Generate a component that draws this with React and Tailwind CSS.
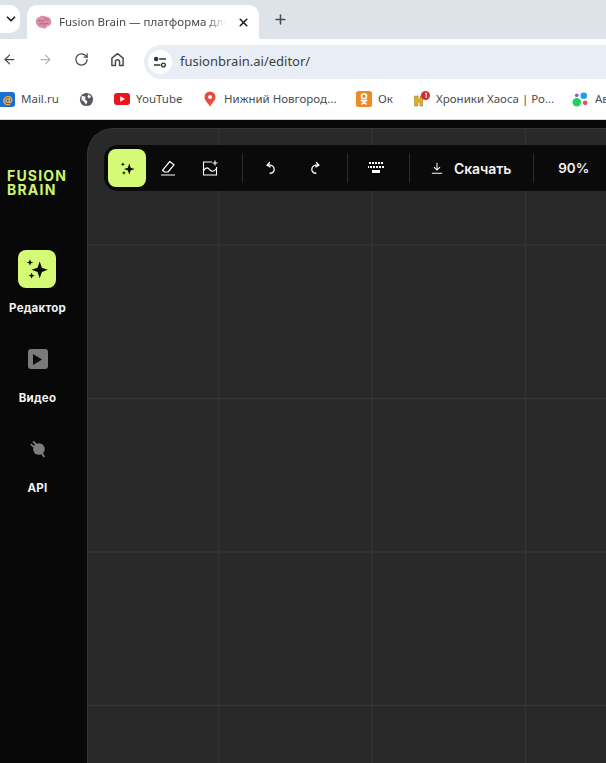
import React from "react";
import { ArrowLeft, ArrowRight, RotateCw, X, Plus, ChevronDown } from "lucide-react";

const Sparkles = ({ className }) => (
  <svg viewBox="0 0 24 24" className={className} fill="currentColor">
    <path d="M14.5 5 L16.5 10.800 L22 12.800 L16.5 14.800 L14.500 20.500 L12.500 14.800 L7 12.800 L12.500 10.800 Z" />
    <path d="M5.500 3 L6.400 5.200 L8.600 6 L6.400 6.800 L5.500 9 L4.600 6.800 L2.400 6 L4.600 5.200 Z" />
    <path d="M7 15.500 L7.800 17.400 L9.800 18.200 L7.800 19 L7 21 L6.200 19 L4.200 18.200 L6.200 17.400 Z" />
  </svg>
);

const UndoIcon = ({ className }) => (
  <svg viewBox="0 0 24 24" className={className} fill="none" stroke="currentColor" strokeWidth="2.200" strokeLinecap="round" strokeLinejoin="round">
    <path d="M9.500 2.500L5.500 7L10.500 10" />
    <path d="M5.500 7C12 6 17.500 9 17.500 14C17.500 18 14 20.500 10.500 21" />
  </svg>
);

const Bookmark = ({ icon, label, className }) => (
  <div className={`flex items-center gap-[6px] shrink-0 ${className}`}>
    {icon}
    {label && <span className="text-[11.500px] text-[#4a4d51] whitespace-nowrap">{label}</span>}
  </div>
);

const NavItem = ({ icon, label, className }) => (
  <div className={`flex flex-col items-center ${className}`}>
    <div className="w-[38px] h-[38px] flex items-center justify-center">{icon}</div>
    <span className="mt-[13px] text-[11.500px] leading-[14px] font-bold tracking-[0.2px] text-[#f2f2f2]">{label}</span>
  </div>
);

const Divider = ({ className }) => <div className={`w-px h-[30px] bg-[#2c2c2e] shrink-0 ${className}`}></div>;

const App = () => {
  return (
    <div className="w-[606px] h-[763px] overflow-hidden flex flex-col bg-[#080808] font-['Noto_Sans',sans-serif]">
      {/* tab strip */}
      <div className="h-[39px] bg-[#dee3ea] flex items-end shrink-0">
        <div className="w-[20px] h-[28px] mb-[6px] bg-white rounded-r-[10px] flex items-center justify-end pr-[2px]">
          <ChevronDown className="w-[14px] h-[14px] text-[#202124]" strokeWidth={3} />
        </div>
        <div className="ml-[7px] w-[232px] h-[34px] bg-white rounded-t-[10px] flex items-center pl-[8px] pr-[9px]">
          <svg viewBox="0 0 16 14" className="w-[17px] h-[15px] shrink-0">
            <path d="M1 7C0 4.500 2 2 4 2C5.500 0.300 9 0.300 10.500 1.500C13 1.200 15.500 3.500 15.300 6.500C15.500 9 13.500 10.500 11.500 10.500C10.500 13 8.500 13.500 7.500 12C5 12.500 1.500 10.500 1 7Z" fill="#db8fa9" />
            <path d="M3 5.500C5 4.500 7 6.500 9 5.500M4 8.500C6.500 7.500 9 9.500 12.500 7.500M9 2.500C9 4 11 5 13 4" stroke="#a65a78" strokeWidth="0.800" fill="none" />
          </svg>
          <span className="ml-[7px] text-[11.500px] text-[#45484c] whitespace-nowrap overflow-hidden w-[167px] [mask-image:linear-gradient(to_right,black_88%,transparent)]">
            Fusion Brain — платформа для генерации
          </span>
          <X className="ml-auto w-[13px] h-[13px] text-[#202124]" strokeWidth={3} />
        </div>
        <Plus className="ml-[14px] mb-[12px] w-[15px] h-[15px] text-[#4a4d51]" strokeWidth={2.500} />
      </div>

      {/* address bar */}
      <div className="h-[40px] bg-white flex items-center shrink-0">
        <ArrowLeft className="ml-[2px] w-[15px] h-[15px] text-[#474a4d]" strokeWidth={2} />
        <ArrowRight className="ml-[21px] w-[15px] h-[15px] text-[#b4b6b9]" strokeWidth={2} />
        <RotateCw className="ml-[21px] w-[15px] h-[15px] text-[#474a4d]" strokeWidth={2} />
        <svg viewBox="0 0 16 16" className="ml-[21px] w-[15px] h-[15px] text-[#474a4d]" fill="none" stroke="currentColor" strokeWidth="1.600" strokeLinejoin="round">
          <path d="M2 14.500V6.500L8 1.800L14 6.500V14.500H10.200V10.500A2.200 2.200 0 0 0 5.800 10.500V14.500Z" />
        </svg>
        <div className="ml-[19px] flex-1 h-[34px] mt-[6px] bg-[#e9eef6] rounded-l-[17px] flex items-center pl-[4px]">
          <div className="w-[24px] h-[24px] rounded-full bg-white flex items-center justify-center">
            <svg viewBox="0 0 16 14" className="w-[14px] h-[12px]" fill="none" stroke="#303235" strokeWidth="1.600">
              <circle cx="3.500" cy="3.500" r="1.800" fill="#303235" />
              <path d="M7 3.500H15M1 10.500H8.500" />
              <circle cx="12" cy="10.500" r="2.200" />
            </svg>
          </div>
          <span className="ml-[8px] text-[13px] text-[#3e4043]">fusionbrain.ai/editor/</span>
        </div>
      </div>

      {/* bookmarks */}
      <div className="h-[41px] bg-white flex items-center shrink-0 border-b border-[#d9d9d9] overflow-hidden">
        <Bookmark
          className="w-[79px]"
          label="Mail.ru"
          icon={
            <div className="w-[15px] h-[15px] bg-[#1a6fd0] rounded-r-[3px] flex items-center justify-center text-[11px] font-bold leading-none text-[#f4b63f]">
              @
            </div>
          }
        />
        <Bookmark
          className="w-[35px]"
          icon={
            <svg viewBox="0 0 16 16" className="w-[15px] h-[15px]">
              <circle cx="8" cy="8" r="7" fill="#55585c" />
              <path d="M3 4L7 5L6.500 8L9 10L7.500 13.500L5.500 10.500L2.500 8ZM10 2.500L13 5L10.500 7L9 5Z" fill="#fff" />
            </svg>
          }
        />
        <Bookmark
          className="w-[90px]"
          label="YouTube"
          icon={
            <svg viewBox="0 0 16 12" className="w-[16px] h-[12px]">
              <rect width="16" height="12" rx="3" fill="#e8141c" />
              <path d="M6.300 3.300L11 6L6.300 8.700Z" fill="#fff" />
            </svg>
          }
        />
        <Bookmark
          className="w-[152px] !gap-[8px]"
          label="Нижний Новгород..."
          icon={
            <svg viewBox="0 0 12 16" className="w-[12px] h-[16px]">
              <path d="M6 0.500A5.500 5.500 0 0 1 11.500 6C11.500 9.500 8 12 6 15.500C4 12 0.500 9.500 0.500 6A5.500 5.500 0 0 1 6 0.500Z" fill="#ea4b3c" />
              <circle cx="6" cy="6" r="2" fill="#fff" />
            </svg>
          }
        />
        <Bookmark
          className="w-[58px]"
          label="Ок"
          icon={
            <svg viewBox="0 0 16 16" className="w-[16px] h-[16px]">
              <rect width="16" height="16" rx="2.500" fill="#ee8a26" />
              <circle cx="8" cy="5.200" r="2.500" fill="none" stroke="#fff" strokeWidth="1.500" />
              <path d="M4.800 9C6.800 10.300 9.200 10.300 11.200 9M8 10V11M5.500 13.500L8 11L10.500 13.500" fill="none" stroke="#fff" strokeWidth="1.500" />
            </svg>
          }
        />
        <Bookmark
          className="w-[158px]"
          label="Хроники Хаоса | Ро..."
          icon={
            <svg viewBox="0 0 16 16" className="w-[16px] h-[16px]">
              <path d="M0.500 5H4V8H6V5H8.500V15H6V11H4V15H0.500Z" fill="#e4b024" stroke="#8a6a10" strokeWidth="0.500" />
              <circle cx="11.500" cy="4.500" r="4.500" fill="#d42f2a" />
              <path d="M11 2.500L12.200 2V7" stroke="#fff" strokeWidth="1" fill="none" />
            </svg>
          }
        />
        <Bookmark
          className="w-[40px]"
          label="Ав"
          icon={
            <svg viewBox="0 0 18 16" className="w-[17px] h-[15px]">
              <circle cx="5" cy="11" r="4.500" fill="#1fd15a" />
              <circle cx="12.500" cy="4" r="3.500" fill="#1f9df0" />
              <circle cx="14" cy="11.500" r="2.500" fill="#ef4a5c" />
              <circle cx="5" cy="3.500" r="2" fill="#8a5be0" />
            </svg>
          }
        />
      </div>

      {/* app */}
      <div className="flex-1 flex min-h-0 font-['Inter',sans-serif]">
        <aside className="w-[75px] shrink-0 flex flex-col items-center">
          <div className="mt-[49px] w-full pl-[7px] text-[14px] leading-[14px] font-bold tracking-[1.200px] text-[#cdf56e]">
            FUSION
            <br />
            BRAIN
          </div>
          <NavItem
            className="mt-[53px]"
            label="Редактор"
            icon={
              <div className="w-[38px] h-[38px] rounded-[8px] bg-[#d4fa76] flex items-center justify-center">
                <Sparkles className="w-[26px] h-[26px] text-[#0a0a0a]" />
              </div>
            }
          />
          <NavItem
            className="mt-[25px]"
            label="Видео"
            icon={
              <div className="w-[20px] h-[20px] rounded-[3px] bg-[#7a7a7a] flex items-center justify-center">
                <svg viewBox="0 0 10 12" className="w-[9px] h-[11px]">
                  <path d="M0 0L10 6L0 12Z" fill="#0a0a0a" />
                </svg>
              </div>
            }
          />
          <NavItem
            className="mt-[25px]"
            label="API"
            icon={
              <svg viewBox="0 0 20 20" className="w-[18px] h-[18px]">
                <circle cx="11" cy="10" r="6.500" fill="#7d7d7d" />
                <path d="M8 5L4.500 1.500M5.500 8L2 4.500M14.500 15L17 19" stroke="#7d7d7d" strokeWidth="2" />
              </svg>
            }
          />
        </aside>

        <main className="relative flex-1 ml-[12px] mt-[8px] bg-[#292929] rounded-tl-[26px] border-l border-t border-[#353535] overflow-hidden bg-[linear-gradient(to_right,#373737_1px,transparent_1px),linear-gradient(to_bottom,#373737_1px,transparent_1px)] bg-[size:153.300px_153.500px] bg-[position:-23px_-38px]">
          {/* floating toolbar */}
          <div className="absolute left-[16px] top-[16px] w-[560px] h-[46px] bg-[#0a0a0a] rounded-l-[14px] flex items-center pl-[4px] text-white">
            <div className="w-[38px] h-[38px] rounded-[8px] bg-[#d4fa76] flex items-center justify-center shrink-0">
              <Sparkles className="w-[17px] h-[17px] text-[#0a0a0a]" />
            </div>
            <svg viewBox="0 0 16 16" className="ml-[14px] w-[16px] h-[16px] shrink-0" fill="none" stroke="currentColor" strokeWidth="1.200" strokeLinejoin="round">
              <path d="M9.800 1.500L14 4.800L8 12H4.500L2.500 10.300Z" />
              <path d="M1 15H15" />
            </svg>
            <svg viewBox="0 0 16 16" className="ml-[26px] w-[16px] h-[16px] shrink-0" fill="none" stroke="currentColor" strokeWidth="1.100">
              <path d="M10 2H1.500V15H14.500V7" />
              <path d="M13 0.500V5.500M10.500 3H15.500" />
              <path d="M1.500 11C4 6.500 6 7.500 8 10C10 12 12 11.500 14.500 8.500" />
            </svg>
            <Divider className="ml-[24px]" />
            <UndoIcon className="ml-[21px] w-[14px] h-[14px] shrink-0" />
            <UndoIcon className="ml-[30px] w-[14px] h-[14px] shrink-0 -scale-x-100" />
            <Divider className="ml-[25px]" />
            <svg viewBox="0 0 16 12" className="ml-[20px] w-[16px] h-[12px] shrink-0" fill="#fff">
              <path d="M1 0h2v2H1zM4 0h2v2H4zM7 0h2v2H7zM10 0h2v2h-2zM13 0h2v2h-2zM2 4h2v2H2zM5 4h2v2H5zM8 4h2v2H8zM11 4h2v2h-2zM0 4h1v2H0zM14 4h2v2h-2zM4 8h8v3H4z" />
            </svg>
            <Divider className="ml-[25px]" />
            <svg viewBox="0 0 14 14" className="ml-[21px] w-[12px] h-[12px] shrink-0" fill="none" stroke="currentColor" strokeWidth="1.200">
              <path d="M7 1V9.500M3.500 6L7 9.500L10.500 6M1 13H13" />
            </svg>
            <span className="ml-[11px] text-[14px] font-semibold tracking-[-0.1px] text-[#f2f2f2]">Скачать</span>
            <Divider className="ml-[22px]" />
            <span className="ml-[24px] text-[13.500px] font-semibold text-[#f2f2f2]">90%</span>
          </div>
        </main>
      </div>
    </div>
  );
};

export default App;
